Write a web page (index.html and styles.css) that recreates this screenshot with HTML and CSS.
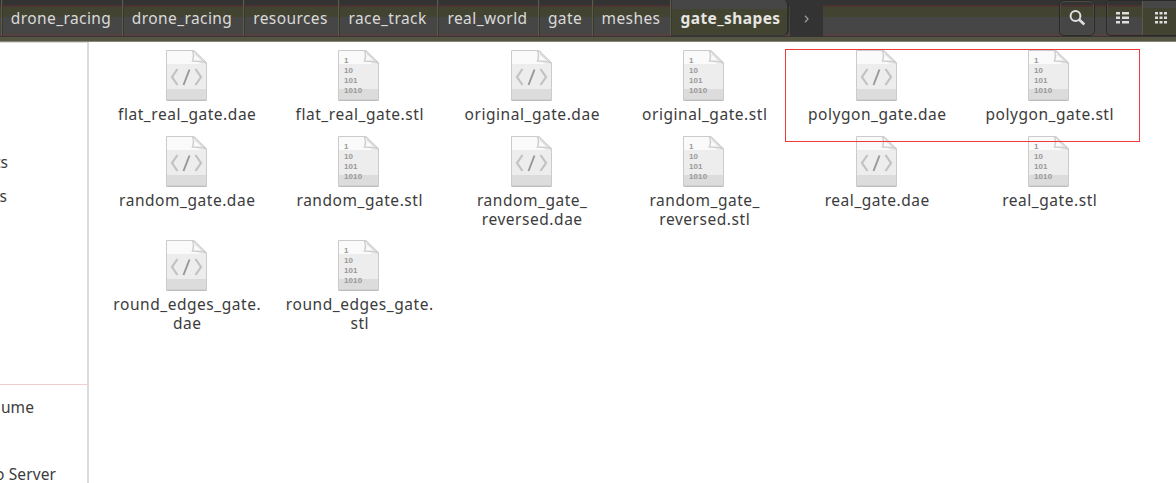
FILE: index.html
```html
<!DOCTYPE html>
<html lang="en">
<head>
<meta charset="utf-8">
<title>gate_shapes</title>
<link rel="stylesheet" href="styles.css">
</head>
<body>
<svg width="0" height="0" class="defs" aria-hidden="true">
  <defs>
    <symbol id="page" viewBox="0 0 41 51">
      <path d="M.5.5h27l13 12v38H.5z" fill="#ededed"/>
      <path d="M1 1h26v6l7 7H1z" fill="#fafafa"/>
      <path d="M1 39h39v11H1z" fill="#dcdcdc"/>
      <path d="M.5.5h27l13 12v38H.5z" fill="none" stroke="#cbcbcb"/>
      <path d="M1 50.200h39" stroke="#b8b8b8"/>
      <path d="M26.500 1c2 4 1 7 0 10 5 0 10 0 13.500 2L28 1z" fill="#fafafa" stroke="#cfcfcf" stroke-width="1.500"/>
      <path d="M29.500 3.500l8 7.500" stroke="#dadada" stroke-width="2"/>
    </symbol>
    <symbol id="code" viewBox="0 0 41 51">
      <use href="#page" width="41" height="51"/>
      <path d="M11.500 19l-5.500 8 5.500 8M29.500 19l5.500 8-5.500 8" fill="none" stroke="#c2c2c2" stroke-width="2.200"/>
      <path d="M23.500 19.500l-6 15.500" stroke="#979797" stroke-width="1.900"/>
    </symbol>
    <symbol id="binary" viewBox="0 0 41 51">
      <use href="#page" width="41" height="51"/>
      <g class="digits"><text x="6" y="12.500">1</text><text x="6" y="22.800">10</text><text x="6" y="33">101</text><text x="6" y="43.200">1010</text></g>
    </symbol>
  </defs>
</svg>
<header class="toolbar">
  <nav class="path">
    <span class="crumb w121">drone_racing</span><span class="crumb w121">drone_racing</span><span class="crumb w95">resources</span><span class="crumb w99">race_track</span><span class="crumb w101">real_world</span><span class="crumb w54">gate</span><span class="crumb w78">meshes</span><span class="crumb active">gate_shapes</span>
    <span class="next"><svg width="6" height="8" viewBox="0 0 6 8"><path d="M1 .8l3 3.200-3 3.200" fill="none" stroke="#999" stroke-width="1.300"/></svg></span>
  </nav>
  <div class="tools">
    <span class="search"><svg width="18" height="18" viewBox="0 0 18 18"><circle cx="7.500" cy="7" r="4.900" fill="none" stroke="#dedede" stroke-width="2"/><path d="M11 10.500l5.300 5" stroke="#dedede" stroke-width="2.600"/></svg></span>
    <div class="views">
      <span class="view"><svg width="13" height="12" viewBox="0 0 13 12" fill="#dedede"><path d="M0 0h4v2.500H0zM6 0h7v2.500H6zM0 4.500h4V7H0zM6 4.500h7V7H6zM0 9h4v2.500H0zM6 9h7v2.500H6z"/></svg></span>
      <span class="view on"><svg width="12" height="12" viewBox="0 0 12 12" fill="#dedede"><path d="M0 0h3v2.500H0zM4.500 0h3v2.500h-3zM9 0h3v2.500H9zM0 4.500h3V7H0zM4.500 4.500h3V7h-3zM9 4.500h3V7H9zM0 9h3v2.500H0zM4.500 9h3v2.500h-3zM9 9h3v2.500H9z"/></svg></span>
    </div>
  </div>
</header>
<div class="body">
  <aside class="sidebar">
    <div class="places"><span class="place end8">Documents</span><span class="place end7">Pictures</span></div>
    <div class="devices"><span class="place end34">Volume</span><span class="place end56">to Server</span></div>
  </aside>
  <main class="files">
    <div class="file"><svg class="icon"><use href="#code"/></svg><span>flat_real_gate.dae</span></div>
    <div class="file"><svg class="icon"><use href="#binary"/></svg><span>flat_real_gate.stl</span></div>
    <div class="file"><svg class="icon"><use href="#code"/></svg><span>original_gate.dae</span></div>
    <div class="file"><svg class="icon"><use href="#binary"/></svg><span>original_gate.stl</span></div>
    <div class="file"><svg class="icon"><use href="#code"/></svg><span>polygon_gate.dae</span></div>
    <div class="file"><svg class="icon"><use href="#binary"/></svg><span>polygon_gate.stl</span></div>
    <div class="file"><svg class="icon"><use href="#code"/></svg><span>random_gate.dae</span></div>
    <div class="file"><svg class="icon"><use href="#binary"/></svg><span>random_gate.stl</span></div>
    <div class="file"><svg class="icon"><use href="#code"/></svg><span>random_gate_<br>reversed.dae</span></div>
    <div class="file"><svg class="icon"><use href="#binary"/></svg><span>random_gate_<br>reversed.stl</span></div>
    <div class="file"><svg class="icon"><use href="#code"/></svg><span>real_gate.dae</span></div>
    <div class="file"><svg class="icon"><use href="#binary"/></svg><span>real_gate.stl</span></div>
    <div class="file"><svg class="icon"><use href="#code"/></svg><span>round_edges_gate.<br>dae</span></div>
    <div class="file"><svg class="icon"><use href="#binary"/></svg><span>round_edges_gate.<br>stl</span></div>
    <div class="highlight"></div>
  </main>
</div>
</body>
</html>
```
FILE: styles.css
```css
* { box-sizing: border-box; }
body {
  margin: 0;
  width: 1176px;
  height: 483px;
  overflow: hidden;
  background: #fff;
  color: #3c3c3c;
  font: 15.5px/19px "Noto Sans", "Open Sans", sans-serif;
  display: flex;
  flex-direction: column;
}
.defs { position: absolute; }
.digits { font: bold 8px "Liberation Sans", sans-serif; fill: #999; letter-spacing: .1px; }
.toolbar {
  height: 42px;
  flex: none;
  display: flex;
  justify-content: space-between;
  background: linear-gradient(#333 0 5px, #4b3332 5px 7px, #434332 7px 17px, #464646 17px 34px, #563f3d 34px 36px, #36363a 36px 37px, #555542 37px 41px, #85857a 41px);
}
.path { display: flex; padding-left: 1px; height: 36px; letter-spacing: .42px; }
.crumb {
  flex: none;
  border-left: 1px solid #5b5b48;
  box-shadow: inset 1px 0 #393933;
  color: #dadad6;
  text-align: center;
  line-height: 36px;
  padding-right: 1px;
  white-space: nowrap;
}
.w121 { width: 121px; padding-right: 2px; }
.w95 { width: 95px; }
.w99 { width: 99px; }
.w101 { width: 101px; }
.w54 { width: 54px; }
.w78 { width: 78px; }
.active {
  width: 119px;
  padding: 0 0 0 3px;
  font-weight: bold;
  color: #e6e6e2;
  background: linear-gradient(#464646 0 9px, #434332 9px);
  border-right: 2px solid #2e2e2b;
  border-bottom: 1px solid #383832;
  border-radius: 0 5px 6px 0;
}
.next {
  width: 33px;
  height: 37px;
  margin-left: 1px;
  background: #333;
  display: flex;
  align-items: center;
  justify-content: center;
}
.tools { display: flex; gap: 11px; height: 36px; }
.search, .view { display: flex; align-items: center; justify-content: center; }
.search { width: 36px; border: 1px solid #292927; box-shadow: inset 0 0 0 1px #4b4b42; border-radius: 5px; }
.views { display: flex; width: 70px; border: 1px solid #292927; border-right: 0; border-radius: 5px 0 0 5px; box-shadow: inset 1px 0 #4b4b42; }
.view { width: 35px; padding-right: 4px; }
.view.on { flex: 1; border-left: 1px solid #5b5b48; padding: 0 0 0 2px; background: linear-gradient(#464646 0 7px, #434332 7px); }
.body { flex: 1; display: flex; min-height: 0; }
.sidebar { width: 89px; flex: none; border-right: 2px solid #dadada; border-top: 1px solid #dcdcdc; overflow: hidden; }
.places { height: 342px; padding-top: 110px; border-bottom: 1px solid #f4cccc; display: flex; flex-direction: column; gap: 15px; }
.devices { display: flex; flex-direction: column; padding-top: 13px; gap: 48px; letter-spacing: .1px; }
.place { display: flex; justify-content: flex-end; white-space: nowrap; }
.end8 { width: 8px; }
.end7 { width: 7px; }
.end34 { width: 34px; }
.end56 { width: 56px; }
.files {
  position: relative;
  display: grid;
  grid-template-columns: repeat(6, 172.5px);
  grid-template-rows: 86px 104px 104px;
  align-content: start;
  padding: 8px 0 0 11px;
}
.file { display: flex; flex-direction: column; align-items: center; text-align: center; white-space: nowrap; letter-spacing: .54px; }
.file span { padding-left: 2px; }
.icon { width: 41px; height: 51px; margin-bottom: 4px; }
.highlight { position: absolute; left: 696px; top: 7px; width: 355px; height: 93px; border: 1px solid #f03a3a; }
```
